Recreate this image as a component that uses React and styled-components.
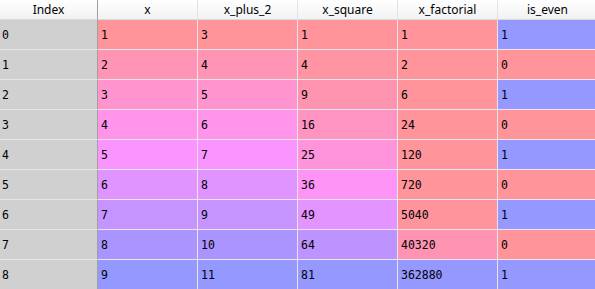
import React from "react";
import styled, { createGlobalStyle } from "styled-components";

const Global = createGlobalStyle`
  html, body { margin: 0; padding: 0; background: #ffffff; overflow: hidden; }
  body { width: 595px; height: 289px; }
`;

const Table = styled.div`
  display: grid;
  grid-template-columns: 98px repeat(5, 100px);
  grid-auto-rows: 30px;
  grid-template-rows: 20px;
  width: 598px;
`;

const HeaderCell = styled.div`
  box-sizing: border-box;
  height: 20px;
  display: flex;
  align-items: center;
  justify-content: center;
  padding-bottom: 1px;
  font-family: "Noto Sans", "Open Sans", sans-serif;
  font-size: 12px;
  color: #000;
  background: linear-gradient(#ffffff, #f1f2f4);
  border-bottom: 1px solid #d9d9d9;
  border-right: 1px solid ${(p) => (p.$index ? "#a0a0a0" : "#e3e3e3")};
`;

const IndexCell = styled.div`
  box-sizing: border-box;
  display: flex;
  align-items: center;
  padding-left: 2px;
  font-family: "DejaVu Sans Mono", "Liberation Mono", monospace;
  font-size: 11.5px;
  color: #000;
  background: #d0d0d0;
  border-right: 1px solid #a0a0a0;
  border-bottom: 1px solid #e6e6e6;
`;

const DataCell = styled.div`
  box-sizing: border-box;
  display: flex;
  align-items: center;
  padding-left: 3px;
  font-family: "DejaVu Sans Mono", "Liberation Mono", monospace;
  font-size: 11.5px;
  color: #000;
  border-right: 1px solid #e8e4ea;
  border-bottom: 1px solid #ece6ee;
`;

const fact = (n) => (n <= 1 ? 1 : n * fact(n - 1));
const xs = [1, 2, 3, 4, 5, 6, 7, 8, 9];
const columns = [
  { name: "x", values: xs },
  { name: "x_plus_2", values: xs.map((x) => x + 2) },
  { name: "x_square", values: xs.map((x) => x * x) },
  { name: "x_factorial", values: xs.map(fact) },
  { name: "is_even", values: xs.map((x) => (x % 2 === 1 ? 1 : 0)) },
];

function hsvToRgb(h, s, v) {
  const i = Math.floor(h * 6);
  const f = h * 6 - i;
  const p = v * (1 - s);
  const q = v * (1 - f * s);
  const t = v * (1 - (1 - f) * s);
  const m = [
    [v, t, p],
    [q, v, p],
    [p, v, t],
    [p, q, v],
    [t, p, v],
    [v, p, q],
  ][i % 6];
  return m;
}

function cellColor(value, min, max) {
  const hue = 0.66 + (0.33 * (max - value)) / (max - min);
  const [r, g, b] = hsvToRgb(hue, 0.7, 1.0);
  const blend = (c) => Math.round(0.6 * c * 255 + 0.4 * 255);
  return `rgb(${blend(r)}, ${blend(g)}, ${blend(b)})`;
}

export default function App() {
  const ranges = columns.map((c) => [Math.min(...c.values), Math.max(...c.values)]);
  return (
    <>
      <Global />
      <Table>
        <HeaderCell $index>Index</HeaderCell>
        {columns.map((c) => (
          <HeaderCell key={c.name}>{c.name}</HeaderCell>
        ))}
        {xs.map((_, r) => (
          <React.Fragment key={r}>
            <IndexCell>{r}</IndexCell>
            {columns.map((c, ci) => (
              <DataCell
                key={c.name}
                style={{ background: cellColor(c.values[r], ranges[ci][0], ranges[ci][1]) }}
              >
                {c.values[r]}
              </DataCell>
            ))}
          </React.Fragment>
        ))}
      </Table>
    </>
  );
}
